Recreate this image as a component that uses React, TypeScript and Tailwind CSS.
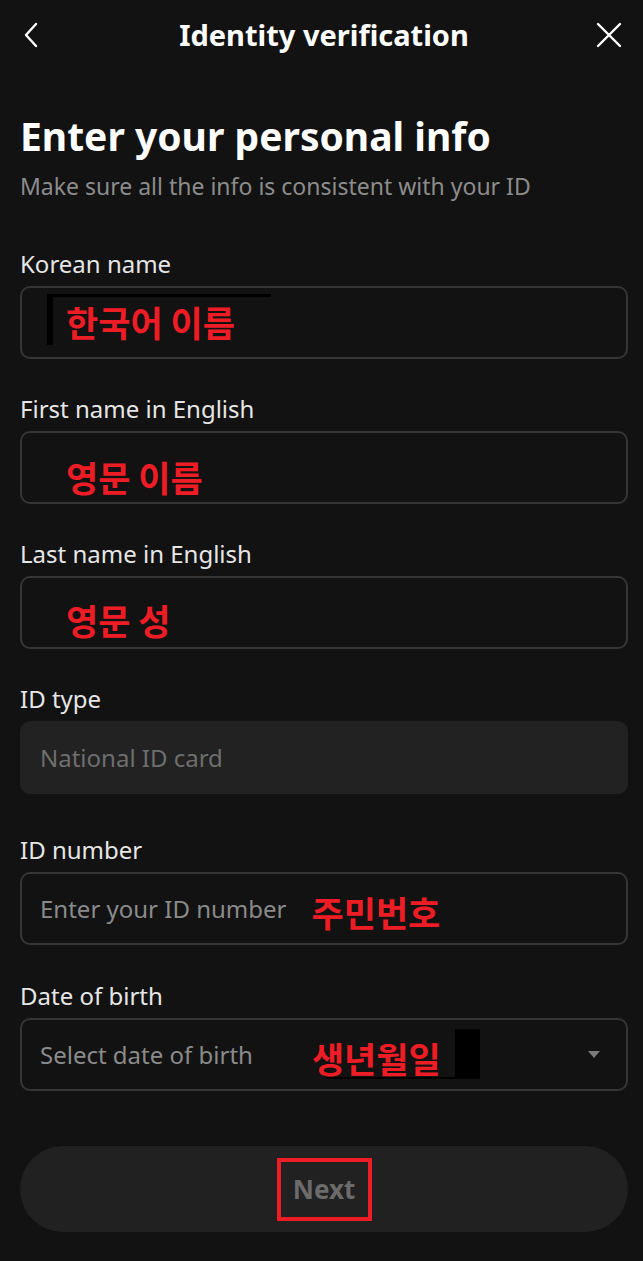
import React from 'react';

const font = { fontFamily: '"Noto Sans", "Noto Sans CJK KR", sans-serif' };

function Field({
  label,
  className = '',
  children,
}: {
  label: string;
  className?: string;
  children: React.ReactNode;
}) {
  return (
    <div className={`flex flex-col gap-[7px] ${className}`}>
      <div className="h-[30px] text-[24px] leading-[30px] text-[#e6e6e6]">{label}</div>
      <div className="relative flex h-[73px] items-center rounded-[10px] border-2 border-[#353535] px-[18px]">
        {children}
      </div>
    </div>
  );
}

// red annotation text on the screenshot
function Red({ children, className = '' }: { children: React.ReactNode; className?: string }) {
  return (
    <span
      className={`text-[35px] font-bold leading-[35px] text-[#ee1c25] ${className}`}
      style={{ fontFamily: '"Noto Sans CJK KR", sans-serif' }}
    >
      {children}
    </span>
  );
}

export default function App() {
  return (
    <div className="min-h-[1261px] w-full bg-[#121212] pl-5 pr-[15px]" style={font}>
      {/* header */}
      <div className="grid h-[70px] grid-cols-[40px_1fr_40px] items-center">
        <svg width="20" height="26" viewBox="0 0 20 26" fill="none" className="ml-[1px]">
          <path d="M15 2 L5 13 L15 24" stroke="white" strokeWidth="2.4" strokeLinecap="round" strokeLinejoin="round" />
        </svg>
        <div className="text-center text-[29px] font-bold text-white">Identity verification</div>
        <svg width="26" height="26" viewBox="0 0 26 26" fill="none" className="ml-auto mr-[6px]">
          <path d="M2 2 L24 24 M24 2 L2 24" stroke="white" strokeWidth="2.4" strokeLinecap="round" />
        </svg>
      </div>

      <div className="mt-[43px] flex flex-col gap-[13px]">
        <h1 className="text-[39px] font-bold leading-[46px] text-white">Enter your personal info</h1>
        <p className="text-[23px] leading-[28px] text-[#8c8c8c]">Make sure all the info is consistent with your ID</p>
      </div>

      <div className="mt-[49px] flex flex-col gap-[35px]">
        <Field label="Korean name">
          {/* redaction marks */}
          <div className="absolute left-[25px] top-[6px] h-[3px] w-[224px] bg-black" />
          <div className="absolute left-[25px] top-[7px] h-[50px] w-[6px] bg-black" />
          <Red className="mb-[3px] ml-[26px]">한국어 이름</Red>
        </Field>

        <Field label="First name in English">
          <Red className="ml-[26px] mt-[17px]">영문 이름</Red>
        </Field>

        <Field label="Last name in English">
          <Red className="ml-[26px] mt-[13px]">영문 성</Red>
        </Field>

        <div className="flex flex-col gap-[7px]">
          <div className="h-[30px] text-[24px] leading-[30px] text-[#e6e6e6]">ID type</div>
          <div className="flex h-[73px] items-center rounded-[10px] bg-[#222222] px-[20px] text-[24px] text-[#6e6e6e]">
            National ID card
          </div>
        </div>

        <Field label="ID number" className="mt-[6px]">
          <span className="text-[24px] text-[#8a8a8a]">Enter your ID number</span>
          <Red className="ml-[25px] mt-[5px]">주민번호</Red>
        </Field>

        <Field label="Date of birth" className="mt-[1px]">
          <span className="text-[24px] text-[#8a8a8a]">Select date of birth</span>
          <Red className="ml-[59px] mt-[5px]">생년월일</Red>
          {/* redaction marks */}
          <div className="absolute left-[433px] top-[9px] h-[50px] w-[25px] bg-black" />
          <div className="absolute left-[304px] top-[57px] h-[2px] w-[130px] bg-black" />
          <svg width="12" height="8" viewBox="0 0 12 8" className="ml-auto mr-[8px]">
            <path d="M0 0 L12 0 L6 7 Z" fill="#7a7a7a" />
          </svg>
        </Field>
      </div>

      {/* next button */}
      <div className="mt-[55px] flex h-[86px] items-center justify-center rounded-full bg-[#212121]">
        <div className="flex h-[63px] w-[95px] items-center justify-center border-[4px] border-[#ee1c25]">
          <span className="text-[26px] font-bold text-[#6b6b6b]">Next</span>
        </div>
      </div>
    </div>
  );
}
